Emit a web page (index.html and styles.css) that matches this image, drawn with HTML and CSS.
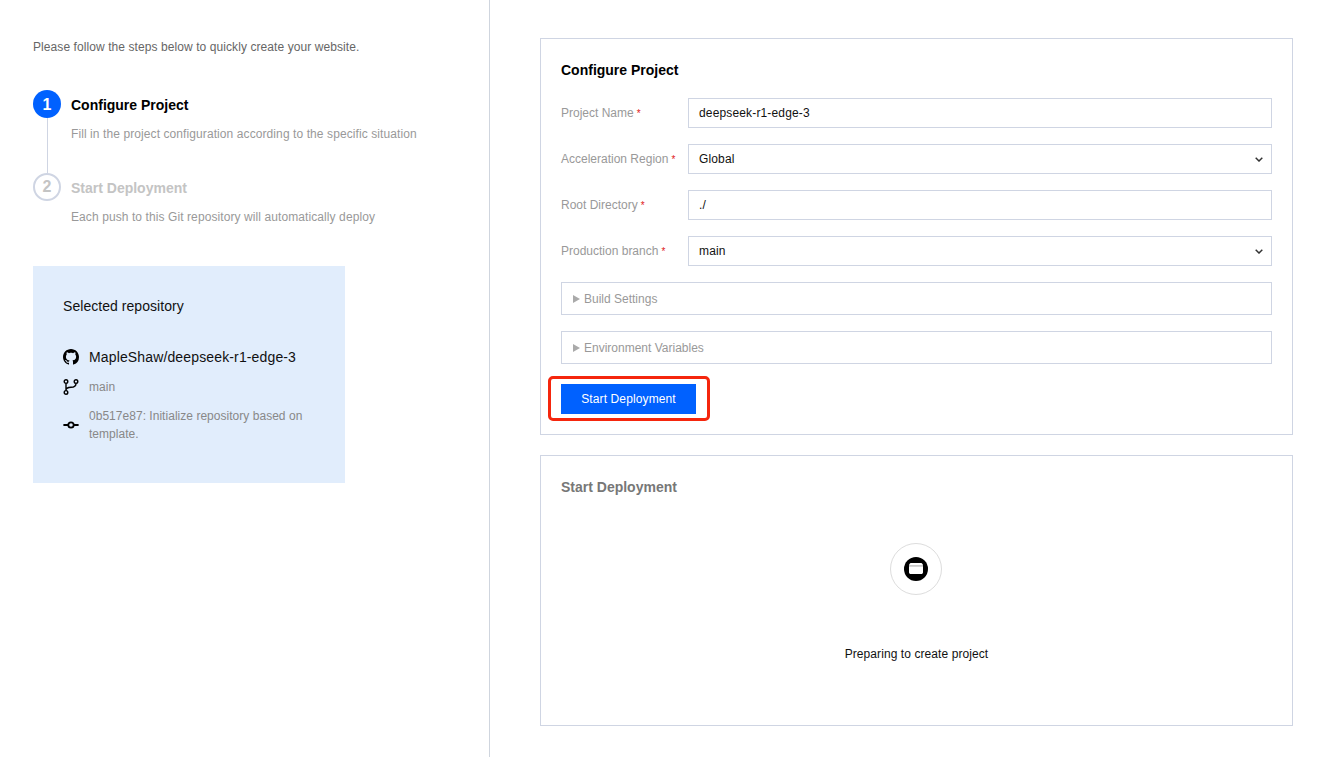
FILE: index.html
```html
<!DOCTYPE html>
<html lang="en">
<head>
<meta charset="utf-8">
<title>Create project</title>
<link rel="stylesheet" href="styles.css">
</head>
<body>
<div class="page">
  <aside class="side">
    <p class="intro">Please follow the steps below to quickly create your website.</p>
    <ol class="steps">
      <li class="step active">
        <div class="rail"><span class="num">1</span><span class="line"></span></div>
        <div class="step-body">
          <div class="step-title">Configure Project</div>
          <div class="step-desc">Fill in the project configuration according to the specific situation</div>
        </div>
      </li>
      <li class="step todo">
        <div class="rail"><span class="num">2</span></div>
        <div class="step-body">
          <div class="step-title">Start Deployment</div>
          <div class="step-desc">Each push to this Git repository will automatically deploy</div>
        </div>
      </li>
    </ol>
    <section class="repo">
      <h3 class="repo-head">Selected repository</h3>
      <div class="repo-row name">
        <svg class="ico" viewBox="0 0 16 16"><path fill="#000" d="M8 0C3.58 0 0 3.58 0 8c0 3.54 2.29 6.53 5.47 7.59.4.07.55-.17.55-.38 0-.19-.01-.82-.01-1.49-2.01.37-2.53-.49-2.69-.94-.09-.23-.48-.94-.82-1.13-.28-.15-.68-.52-.01-.53.63-.01 1.08.58 1.23.82.72 1.21 1.87.87 2.33.66.07-.52.28-.87.51-1.07-1.78-.2-3.64-.89-3.64-3.95 0-.87.31-1.59.82-2.15-.08-.2-.36-1.02.08-2.12 0 0 .67-.21 2.2.82.64-.18 1.32-.27 2-.27s1.36.09 2 .27c1.53-1.04 2.2-.82 2.2-.82.44 1.1.16 1.92.08 2.12.51.56.82 1.27.82 2.15 0 3.07-1.87 3.75-3.65 3.95.29.25.54.73.54 1.48 0 1.07-.01 1.93-.01 2.2 0 .21.15.46.55.38A8.01 8.01 0 0 0 16 8c0-4.42-3.58-8-8-8z"/></svg>
        <span>MapleShaw/deepseek-r1-edge-3</span>
      </div>
      <div class="repo-row meta">
        <svg class="ico" viewBox="0 0 16 16" fill="none" stroke="#000" stroke-width="1.4"><circle cx="3" cy="2.6" r="1.8"/><circle cx="3" cy="13.4" r="1.8"/><circle cx="13" cy="2.6" r="1.8"/><path d="M3 4.4v7.2M13 4.4c0 3-2 3.8-5 3.9-2.6.1-5 .6-5 3"/></svg>
        <span>main</span>
      </div>
      <div class="repo-row meta">
        <svg class="ico" viewBox="0 0 16 16" fill="none" stroke="#000" stroke-width="1.8"><circle cx="8" cy="8" r="2.7"/><path d="M.4 8h5M10.600 8h5"/></svg>
        <span>0b517e87: Initialize repository based on template.</span>
      </div>
    </section>
  </aside>
  <main class="content">
    <section class="card config">
      <h2 class="card-title">Configure Project</h2>
      <div class="form">
        <div class="field"><label class="lbl">Project Name<i>*</i></label><div class="input">deepseek-r1-edge-3</div></div>
        <div class="field"><label class="lbl">Acceleration Region<i>*</i></label><div class="input select">Global<svg class="chev" viewBox="0 0 8 5"><path d="M.7.8 4 4 7.300.8" fill="none" stroke="#333" stroke-width="1.500"/></svg></div></div>
        <div class="field"><label class="lbl">Root Directory<i>*</i></label><div class="input">./</div></div>
        <div class="field"><label class="lbl">Production branch<i>*</i></label><div class="input select">main<svg class="chev" viewBox="0 0 8 5"><path d="M.7.8 4 4 7.300.8" fill="none" stroke="#333" stroke-width="1.500"/></svg></div></div>
      </div>
      <div class="fold"><span class="tri"></span>Build Settings</div>
      <div class="fold"><span class="tri"></span>Environment Variables</div>
      <div class="action">
        <span class="highlight"></span>
        <button class="btn" type="button">Start Deployment</button>
      </div>
    </section>
    <section class="card deploy">
      <h2 class="card-title muted">Start Deployment</h2>
      <div class="empty">
        <div class="badge">
          <svg class="box" viewBox="0 0 24 24"><circle cx="12" cy="12" r="12" fill="#000"/><path fill="#fff" d="M5 8.500c0-1 .8-2.500 1.800-2.500h10.400c1 0 1.800 1.500 1.800 2.500v6.700c0 1-.8 1.800-1.800 1.800H6.800c-1 0-1.800-.8-1.800-1.800z"/><path fill="#777" d="M5 8.600h14v.7H5z"/></svg>
        </div>
        <p class="empty-text">Preparing to create project</p>
      </div>
    </section>
  </main>
</div>
</body>
</html>
```
FILE: styles.css
```css
* { box-sizing: border-box; }
html, body { margin: 0; padding: 0; background: #fff; }
body { font-family: "Liberation Sans", Arial, sans-serif; font-size: 12px; color: #000; }
.page { display: flex; height: 757px; overflow: hidden; }

.side { width: 490px; flex: none; border-right: 1px solid #cfd5de; padding: 38px 33px 0; }
.intro { margin: 0; font-size: 12px; line-height: 18px; color: #666; letter-spacing: .08px; }
.steps { list-style: none; margin: 34px 0 0; padding: 0; }
.step { display: flex; gap: 10px; height: 83px; }
.step.todo { height: 93px; }
.step-body { padding-top: 1px; }
.rail { width: 28px; flex: none; display: flex; flex-direction: column; align-items: center; }
.num { width: 28px; height: 28px; border-radius: 50%; flex: none; display: flex; align-items: center; justify-content: center; font-size: 16px; font-weight: 700; }
.active .num { background: #0061ff; color: #fff; padding-top: 2px; }
.todo .num { border: 2px solid #cfd5e3; color: #c4c4c4; }
.line { width: 1px; flex: 1; background: #cfd5e3; }
.step-title { font-size: 14px; font-weight: 700; line-height: 28px; color: #000; }
.todo .step-title { color: #c4c4c4; }
.step-desc { margin-top: 6px; font-size: 12px; line-height: 18px; color: #999; letter-spacing: .09px; }

.repo { width: 312px; height: 217px; background: #e1edfc; padding: 30px; }
.repo-head { margin: 0 0 31px; font-size: 14px; font-weight: 400; line-height: 20px; color: #111; letter-spacing: .05px; }
.repo-row { display: flex; align-items: center; gap: 10px; }
.ico { width: 16px; height: 16px; flex: none; }
.repo-row.name { font-size: 14px; line-height: 20px; color: #111; margin-bottom: 11px; letter-spacing: .14px; }
.repo-row.meta { font-size: 12px; line-height: 18px; color: #888; margin-bottom: 11px; letter-spacing: .03px; }

.content { flex: 1; padding: 38px 30px 0 50px; }
.card { border: 1px solid #cfd5e3; background: #fff; padding: 20px; }
.config { height: 397px; }
.deploy { height: 271px; margin-top: 20px; }
.card-title { margin: 0; font-size: 14px; font-weight: 700; line-height: 22px; color: #000; }
.card-title.muted { color: #777; }
.form { margin-top: 17px; display: flex; flex-direction: column; gap: 16px; }
.field { display: flex; align-items: center; }
.lbl { width: 127px; flex: none; font-size: 12px; color: #999; }
.lbl i { color: #e02020; font-style: normal; font-size: 10px; margin-left: 3px; }
.input { flex: 1; height: 30px; border: 1px solid #cfd5e3; padding: 0 8px 0 10px; display: flex; align-items: center; justify-content: space-between; font-size: 12px; color: #111; letter-spacing: .15px; }
.chev { width: 8px; height: 5px; }
.fold { height: 33px; margin-top: 16px; border: 1px solid #cfd5e3; padding: 0 11px; display: flex; align-items: center; gap: 4px; font-size: 12px; color: #999; }
.tri { width: 0; height: 0; border-left: 7px solid #aaa; border-top: 4px solid transparent; border-bottom: 4px solid transparent; }
.action { position: relative; width: 135px; margin-top: 20px; }
.highlight { position: absolute; left: -13px; top: -8px; width: 162px; height: 45px; border: 3px solid #f5260d; border-radius: 5px; }
.btn { display: block; width: 135px; height: 30px; border: 0; padding: 0; background: #0061ff; color: #fff; font: 400 12px "Liberation Sans", Arial, sans-serif; letter-spacing: .12px; }

.empty { display: flex; flex-direction: column; align-items: center; margin-top: 45px; }
.badge { width: 52px; height: 52px; margin-right: 1px; border-radius: 50%; border: 1px solid #ddd; display: flex; align-items: center; justify-content: center; }
.box { width: 24px; height: 24px; }
.empty-text { margin: 50px 0 0; font-size: 12px; line-height: 18px; color: #111; letter-spacing: .08px; }
```
